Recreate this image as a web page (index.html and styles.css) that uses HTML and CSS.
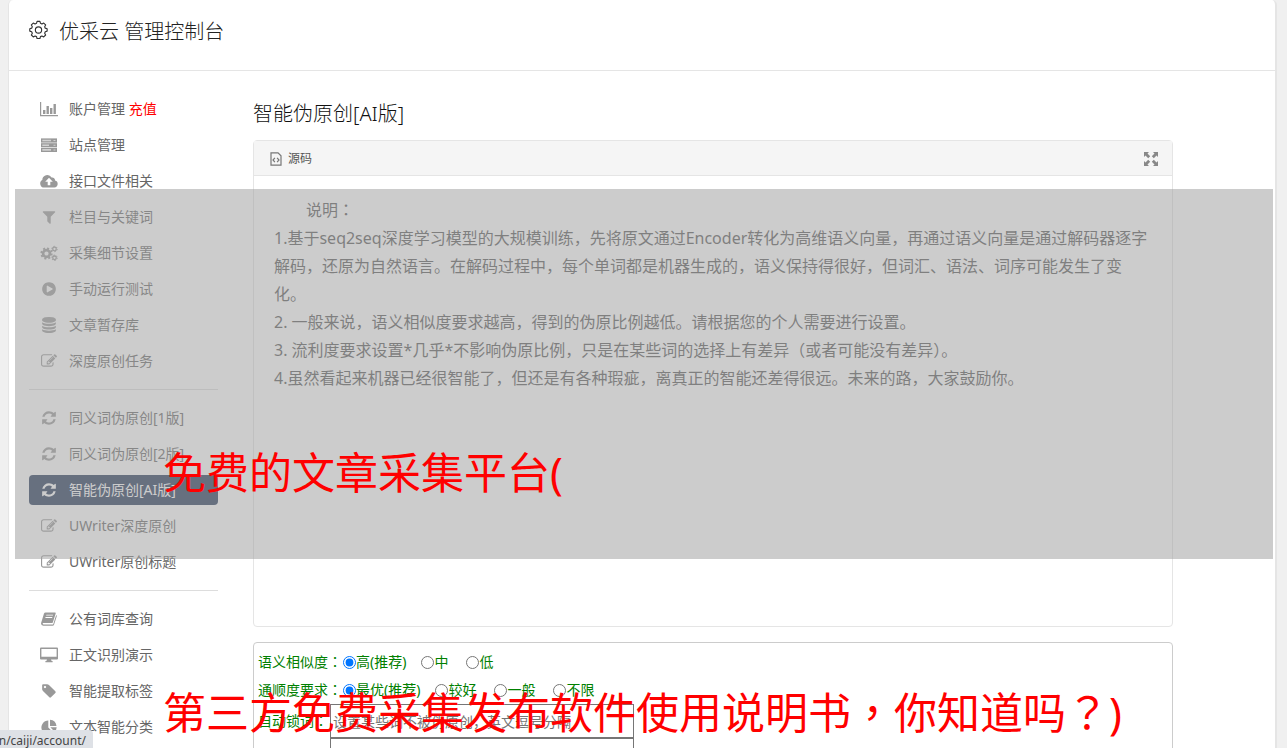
FILE: index.html
```html
<!DOCTYPE html>
<html lang="zh-CN">
<head>
<meta charset="utf-8">
<title>优采云 管理控制台</title>
<link rel="stylesheet" href="styles.css">
</head>
<body>
<svg class="sprite" aria-hidden="true">
  <symbol id="chart" viewBox="0 0 20 16"><path d="M1 1h1.2v13H19v1.200H1z"/><path d="M4 9h2.400v4H4zM7.500 5h2.400v8H7.500zM11 7h2.400v6H11zM14.500 3h2.400v10h-2.400z"/></symbol>
  <symbol id="server" viewBox="0 0 18 16"><path opacity=".45" d="M1 1.500h16v4H1zM1 6.200h16v4H1zM1 10.900h16v4H1z"/><path fill-rule="evenodd" d="M1 1.500h16v4H1zm1.300 1.200v1.600H11V2.700zm11.200.3v1h2V3zM1 6.200h16v4H1zm1.300 1.200V9H9V7.400zm11.200.3v1h2v-1zM1 10.900h16v4H1zm1.300 1.200v1.600H11v-1.600zm11.200.3v1h2v-1z"/></symbol>
  <symbol id="cloud" viewBox="0 0 18 16"><path fill-rule="evenodd" d="M4.500 14.500A4 4 0 0 1 2.300 7 5 5 0 0 1 11.600 4.500 2.800 2.800 0 0 1 15 7.600a3.500 3.500 0 0 1-.7 6.900zM9 4.800 5.200 8.700h2.500v3.500h2.600V8.700h2.500z"/></symbol>
  <symbol id="filter" viewBox="0 0 1792 1792"><path d="M1595 295q17 41-14 70l-493 493v742q0 42-39 59-13 5-25 5-27 0-45-19l-256-256q-19-19-19-45v-486l-493-493q-31-29-14-70 17-39 59-39h1280q42 0 59 39z"/></symbol>
  <symbol id="cogs" viewBox="0 0 18 16"><g fill="none" stroke="currentColor"><circle cx="6.500" cy="8.500" r="3.400" stroke-width="2.600"/><circle cx="6.500" cy="8.500" r="5.200" stroke-width="1.800" stroke-dasharray="2.040 2.040"/><circle cx="14.500" cy="4" r="1.800" stroke-width="1.300"/><circle cx="14.500" cy="4" r="2.700" stroke-width="1" stroke-dasharray="1.410 1.410"/><circle cx="14.500" cy="12.800" r="1.800" stroke-width="1.300"/><circle cx="14.500" cy="12.800" r="2.700" stroke-width="1" stroke-dasharray="1.410 1.410"/></g></symbol>
  <symbol id="play" viewBox="0 0 1792 1792"><path d="M896 128q209 0 385.500 103t279.500 279.500 103 385.500-103 385.500-279.500 279.500-385.500 103-385.500-103-279.500-279.500-103-385.500 103-385.500 279.500-279.500 385.500-103zm384 823q32-18 32-55t-32-55l-544-320q-31-19-64-1-32 19-32 56v640q0 37 32 56 16 8 32 8 17 0 32-9z"/></symbol>
  <symbol id="database" viewBox="0 0 1792 1792"><path d="M896 768q237 0 443-43t325-127v170q0 69-103 128t-280 93.500-385 34.500-385-34.500-280-93.500-103-128v-170q119 84 325 127t443 43zm0 768q237 0 443-43t325-127v170q0 69-103 128t-280 93.500-385 34.500-385-34.500-280-93.500-103-128v-170q119 84 325 127t443 43zm0-384q237 0 443-43t325-127v170q0 69-103 128t-280 93.500-385 34.500-385-34.500-280-93.500-103-128v-170q119 84 325 127t443 43zm0-1152q208 0 385 34.500t280 93.500 103 128v128q0 69-103 128t-280 93.500-385 34.500-385-34.500-280-93.500-103-128v-128q0-69 103-128t280-93.500 385-34.500z"/></symbol>
  <symbol id="edit" viewBox="0 0 1792 1792"><path d="M888 1184l116-116-152-152-116 116v56h96v96h56zm440-720q-16-16-33 1l-350 350q-17 17-1 33t33-1l350-350q17-17 1-33zm80 594v190q0 119-84.500 203.500t-203.500 84.500h-832q-119 0-203.500-84.500t-84.500-203.500v-832q0-119 84.500-203.500t203.500-84.500h832q63 0 117 25 15 7 18 23 3 17-9 29l-49 49q-14 14-32 8-23-6-45-6h-832q-66 0-113 47t-47 113v832q0 66 47 113t113 47h832q66 0 113-47t47-113v-126q0-13 9-22l64-64q15-15 35-7t20 29zm-96-738l288 288-672 672h-288v-288zm444 132l-92 92-288-288 92-92q28-28 68-28t68 28l152 152q28 28 28 68t-28 68z"/></symbol>
  <symbol id="refresh" viewBox="0 0 1792 1792"><path d="M1639 1056q0 5-1 7-64 268-268 434.500t-478 166.500q-146 0-282.500-55t-243.500-157l-129 129q-19 19-45 19t-45-19-19-45v-448q0-26 19-45t45-19h448q26 0 45 19t19 45-19 45l-137 137q71 66 161 102t187 36q134 0 250-65t186-179q11-17 53-117 8-23 30-23h192q13 0 22.500 9.500t9.500 22.500zm25-800v448q0 26-19 45t-45 19h-448q-26 0-45-19t-19-45 19-45l138-138q-148-137-349-137-134 0-250 65t-186 179q-11 17-53 117-8 23-30 23h-199q-13 0-22.500-9.500t-9.500-22.500v-7q65-268 270-434.500t480-166.500q146 0 284 55.500t245 156.500l130-129q19-19 45-19t45 19 19 45z"/></symbol>
  <symbol id="book" viewBox="0 0 18 16"><path fill-rule="evenodd" d="M5.500 1.500H15q1 0 .7 1l-2.800 8.700q-.3.900-1.300.9H3.200q-.6 0-.5.700.1.700.9.700h8.900q.6 0 .8-.6l2.900-8.800q.8.300.5 1.300l-2.600 8.200q-.4 1.200-1.600 1.200H3.300Q1 14.600 1 12.300L4 2.600q.4-1.100 1.500-1.100zm.9 2.300-.3.800h6.800l.3-.8zm-.8 2.300-.3.800h6.800l.3-.8z"/></symbol>
  <symbol id="desktop" viewBox="0 0 20 16"><path fill-rule="evenodd" d="M2 0.500h16q1 0 1 1v10q0 1-1 1h-6l.6 1.500h1v1.200H6.400V14h1L8 12.500H2q-1 0-1-1v-10q0-1 1-1zm.4 1.400v7.900h15.200V1.900z"/></symbol>
  <symbol id="tag" viewBox="0 0 1792 1792"><path d="M576 448q0-53-37.500-90.500t-90.500-37.500-90.500 37.500-37.500 90.500 37.500 90.500 90.500 37.500 90.500-37.500 37.500-90.500zm1067 576q0 53-37 90l-491 492q-39 37-91 37-53 0-90-37l-715-716q-38-37-64.500-101t-26.500-117v-416q0-52 38-90t90-38h416q53 0 117 26.500t102 64.500l715 714q37 39 37 91z"/></symbol>
  <symbol id="pie" viewBox="0 0 16 16"><path d="M7.300 1.500v7l5 5A7 7 0 1 1 7.300 1.500zM9 .8A7 7 0 0 1 15.500 7H9zM9.300 8.300h6.400a7 7 0 0 1-2 4.500z"/></symbol>
  <symbol id="gear" viewBox="0 0 20 20"><g fill="none" stroke="currentColor" stroke-width="1.200" stroke-linejoin="round"><path d="M8.500 1.500h3l.6 2 1.500.7 1.900-1 2 2-1 1.900.6 1.500 2 .6v2.500l-2 .7-.6 1.500 1 1.900-2 2-1.900-1-1.500.7-.6 2h-3l-.6-2-1.500-.7-1.900 1-2-2 1-1.900-.7-1.500-2-.7V9.200l2-.6.7-1.500-1-1.900 2-2 1.900 1 1.500-.7z"/><circle cx="10" cy="10.500" r="3.300"/></g></symbol>
  <symbol id="source" viewBox="0 0 12 14"><g fill="none" stroke="currentColor" stroke-width="1.200"><path d="M1 .8h7l3 3v9.400H1z"/><path d="M4.900 5.800 3 8l1.900 2.200M7.100 5.800 9 8l-1.900 2.200"/></g></symbol>
  <symbol id="expand" viewBox="0 0 14 14"><path d="M0 0h5L3.500 1.500 6.200 4.200 4.200 6.200 1.500 3.500 0 5zM14 0v5l-1.500-1.500-2.700 2.700-2-2 2.700-2.700L9 0zM0 14V9l1.500 1.500 2.700-2.700 2 2-2.700 2.700L5 14zM14 14H9l1.500-1.500-2.700-2.700 2-2 2.700 2.700L14 9z"/></symbol>
</svg>

<div class="panel">
  <header class="topbar">
    <svg class="gear"><use href="#gear"/></svg>
    <h1>优采云 管理控制台</h1>
  </header>
  <div class="columns">
    <nav class="side">
      <div class="group">
        <a class="item" href="#"><svg class="icon wide"><use href="#chart"/></svg><span>账户管理 <span class="pay">充值</span></span></a>
        <a class="item" href="#"><svg class="icon wide"><use href="#server"/></svg>站点管理</a>
        <a class="item" href="#"><svg class="icon wide"><use href="#cloud"/></svg>接口文件相关</a>
        <a class="item" href="#"><svg class="icon"><use href="#filter"/></svg>栏目与关键词</a>
        <a class="item" href="#"><svg class="icon wide"><use href="#cogs"/></svg>采集细节设置</a>
        <a class="item" href="#"><svg class="icon"><use href="#play"/></svg>手动运行测试</a>
        <a class="item" href="#"><svg class="icon"><use href="#database"/></svg>文章暂存库</a>
        <a class="item" href="#"><svg class="icon"><use href="#edit"/></svg>深度原创任务</a>
      </div>
      <div class="group">
        <a class="item" href="#"><svg class="icon"><use href="#refresh"/></svg>同义词伪原创[1版]</a>
        <a class="item" href="#"><svg class="icon"><use href="#refresh"/></svg>同义词伪原创[2版]</a>
        <a class="item active" href="#"><svg class="icon"><use href="#refresh"/></svg>智能伪原创[AI版]</a>
        <a class="item" href="#"><svg class="icon"><use href="#edit"/></svg>UWriter深度原创</a>
        <a class="item" href="#"><svg class="icon"><use href="#edit"/></svg>UWriter原创标题</a>
      </div>
      <div class="group">
        <a class="item" href="#"><svg class="icon wide"><use href="#book"/></svg>公有词库查询</a>
        <a class="item" href="#"><svg class="icon wide"><use href="#desktop"/></svg>正文识别演示</a>
        <a class="item" href="#"><svg class="icon"><use href="#tag"/></svg>智能提取标签</a>
        <a class="item" href="#"><svg class="icon"><use href="#pie"/></svg>文本智能分类</a>
      </div>
    </nav>
    <main class="main">
      <h2>智能伪原创[AI版]</h2>
      <section class="editor">
        <div class="tools">
          <button class="tool" type="button"><svg class="source"><use href="#source"/></svg>源码</button>
          <button class="tool" type="button" aria-label="全屏"><svg class="expand"><use href="#expand"/></svg></button>
        </div>
        <div class="text">
          <p class="lead">说明<i lang="zh-TW">：</i></p>
          <p>1.基于seq2seq深度学习模型的大规模训练，先将原文通过Encoder转化为高维语义向量，再通过语义向量是通过解码器逐字解码，还原为自然语言。在解码过程中，每个单词都是机器生成的，语义保持得很好，但词汇、语法、词序可能发生了变化。</p>
          <p>2. 一般来说，语义相似度要求越高，得到的伪原比例越低。请根据您的个人需要进行设置。</p>
          <p>3. 流利度要求设置*几乎*不影响伪原比例，只是在某些词的选择上有差异（或者可能没有差异）。</p>
          <p>4.虽然看起来机器已经很智能了，但还是有各种瑕疵，离真正的智能还差得很远。未来的路，大家鼓励你。</p>
        </div>
      </section>
      <form class="options">
        <div class="row">
          <span>语义相似度<i lang="zh-TW">：</i></span>
          <div class="choices">
            <label><input type="radio" name="sim" checked>高(推荐)</label>
            <label><input type="radio" name="sim">中</label>
            <label><input type="radio" name="sim">低</label>
          </div>
        </div>
        <div class="row">
          <span>通顺度要求<i lang="zh-TW">：</i></span>
          <div class="choices">
            <label><input type="radio" name="flow" checked>最优(推荐)</label>
            <label><input type="radio" name="flow">较好</label>
            <label><input type="radio" name="flow">一般</label>
            <label><input type="radio" name="flow">不限</label>
          </div>
        </div>
        <div class="row">
          <label for="lock">自动锁词<i lang="zh-TW">：</i></label>
          <div class="fields">
            <input id="lock" type="text" placeholder="设置某些词不被伪原创，英文逗号分隔">
            <input type="text" aria-label="锁词">
          </div>
        </div>
      </form>
    </main>
  </div>
</div>

<div class="shade"></div>
<div class="caption first">免费的文章采集平台(</div>
<div class="caption second">第三方免费采集发布软件使用说明书<i lang="zh-TW">，</i>你知道吗<i lang="zh-TW">？</i>)</div>
<div class="status"><span>n/caiji/account/</span></div>
</body>
</html>
```
FILE: styles.css
```css
* { box-sizing: border-box; }

body {
  margin: 0;
  padding: 0 10px 0 8px;
  height: 100vh;
  overflow: hidden;
  position: relative;
  background: #f0f0f0;
  color: #333;
  font: 14px/28px "Noto Sans", "Noto Sans CJK SC", sans-serif;
}

h1, h2, p { margin: 0; font-weight: 400; }
/* full-width punctuation centred in its cell */
i { font-family: "Noto Sans CJK TC", sans-serif; font-style: normal; line-height: 1; }
svg { fill: currentColor; flex: none; overflow: visible; }
.sprite { position: absolute; width: 0; height: 0; }

.panel {
  height: 100vh;
  overflow: hidden;
  background: #fff;
  border: 1px solid #e5e5e5;
  border-width: 0 2px 0 1px;
  border-radius: 5px 5px 0 0;
}

.topbar {
  display: flex;
  align-items: center;
  gap: 11px;
  height: 71px;
  padding: 0 20px 8px;
  border-bottom: 1px solid #e5e5e5;
}
.topbar h1 { font-size: 20px; font-weight: 300; padding-top: 2px; color: #222; }
.gear { width: 19px; height: 19px; margin-bottom: 3px; }

.columns { display: flex; gap: 35px; padding: 23px 102px 0 20px; }

.side { flex: none; width: 189px; }
.group { display: flex; flex-direction: column; gap: 6px; }
.group + .group { margin-top: 13px; padding-top: 13px; border-top: 1px solid #ddd; }
.item {
  display: flex;
  align-items: center;
  gap: 10px;
  height: 30px;
  padding-left: 10px;
  border-radius: 4px;
  color: #666;
  text-decoration: none;
}
.icon { width: 16px; height: 16px; margin: 0 2px; color: #999; }
.wide { width: 20px; margin: 0; }
.pay { color: #f00; }
.active { background: #1f3355; color: #fff; }
.active .icon { color: #fff; }

.main { flex: 1; min-width: 0; }
.main h2 { padding: 6px 0 12px; font-size: 20px; font-weight: 300; color: #111; }

.editor { height: 487px; border: 1px solid #e5e5e5; border-radius: 4px; }
.tools {
  display: flex;
  justify-content: space-between;
  height: 35px;
  padding: 2px 14px 0 16px;
  background: #f5f5f5;
  border-bottom: 1px solid #e5e5e5;
}
.tool {
  display: flex;
  align-items: center;
  gap: 6px;
  padding: 0;
  border: 0;
  background: none;
  color: #555;
  font: 12px/20px "Noto Sans", "Noto Sans CJK SC", sans-serif;
}
.source { width: 12px; height: 14px; color: #777; }
.expand { width: 14px; height: 14px; color: #888; }
.text { padding: 20px; font-size: 16px; color: #555; }
.text .lead { text-indent: 32px; }

.options {
  margin-top: 15px;
  padding: 5px 4px 20px;
  border: 1px solid #ccc;
  border-radius: 4px;
  color: #008000;
}
.row { display: flex; align-items: flex-start; }
.choices { display: flex; gap: 15px; }
.choices label { display: flex; align-items: center; }
.choices label + label + label { margin-left: 3px; }
.choices input { width: 13px; height: 13px; margin: 0; }
.row > span { width: 85px; }
.row > label { width: 72px; padding-top: 3px; }
.fields { display: flex; flex-direction: column; width: 304px; }
.fields input {
  height: 34px;
  padding: 1px 2px;
  border: 1px solid #767676;
  font: 14px/20px "Noto Sans", "Noto Sans CJK SC", sans-serif;
}

.shade {
  position: absolute;
  top: 189px;
  left: 15px;
  right: 14px;
  height: 370px;
  background: rgba(162, 162, 162, .55);
}
.caption {
  position: absolute;
  left: 163px;
  color: #f00;
  font-size: 43px;
  line-height: 60px;
  white-space: nowrap;
}
.first { top: 443px; }
.second { top: 683px; }
.status {
  position: absolute;
  left: 0;
  bottom: 0;
  display: flex;
  justify-content: flex-end;
  width: 93px;
  height: 18px;
  padding-right: 7px;
  overflow: hidden;
  background: #dee1e6;
  border-radius: 0 4px 0 0;
  color: #444;
  font-size: 12px;
  line-height: 22px;
}
```
